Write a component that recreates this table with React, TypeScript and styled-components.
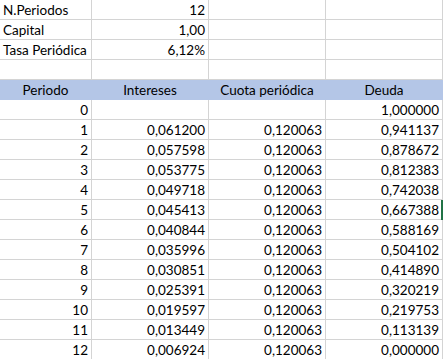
import React from "react";
import styled, { createGlobalStyle } from "styled-components";

const GlobalStyle = createGlobalStyle`
  html, body {
    margin: 0;
    padding: 0;
    background: #ffffff;
  }
  body {
    font-family: Lato, "Liberation Sans", sans-serif;
    font-size: 13.5px;
    color: #000000;
  }
`;

export const Sheet = styled.div`
  display: grid;
  grid-template-columns: 92px 117px 117px 117px;
  grid-auto-rows: 20px;
  width: 443px;
  overflow: hidden;
`;

export const Cell = styled.div<{ $align?: "left" | "right" | "center" }>`
  position: relative;
  box-sizing: border-box;
  height: 20px;
  border-right: 1px solid #d4d4d4;
  border-bottom: 1px solid #d4d4d4;
  padding: 0 3px;
  line-height: 20px;
  white-space: nowrap;
  overflow: visible;
  text-align: ${(p) => p.$align || "left"};
`;

export const HeadCell = styled(Cell)`
  background: #b4c6e7;
  border-right-color: #b4c6e7;
  border-bottom-color: #b4c6e7;
  text-align: center;
`;

export const Selected = styled(Cell)`
  &::after {
    content: "";
    position: absolute;
    right: -1px;
    top: 0;
    width: 2px;
    height: 20px;
    background: #217346;
  }
`;

const params: [string, string][] = [
  ["N.Periodos", "12"],
  ["Capital", "1,00"],
  ["Tasa Periódica", "6,12%"],
  ["", ""],
];

const rows: [string, string, string, string][] = [
  ["0", "", "", "1,000000"],
  ["1", "0,061200", "0,120063", "0,941137"],
  ["2", "0,057598", "0,120063", "0,878672"],
  ["3", "0,053775", "0,120063", "0,812383"],
  ["4", "0,049718", "0,120063", "0,742038"],
  ["5", "0,045413", "0,120063", "0,667388"],
  ["6", "0,040844", "0,120063", "0,588169"],
  ["7", "0,035996", "0,120063", "0,504102"],
  ["8", "0,030851", "0,120063", "0,414890"],
  ["9", "0,025391", "0,120063", "0,320219"],
  ["10", "0,019597", "0,120063", "0,219753"],
  ["11", "0,013449", "0,120063", "0,113139"],
  ["12", "0,006924", "0,120063", "0,000000"],
];

export default function App() {
  return (
    <>
      <GlobalStyle />
      <Sheet>
        {params.map(([label, value], i) => (
          <React.Fragment key={"p" + i}>
            <Cell>{label}</Cell>
            <Cell $align="right">{value}</Cell>
            <Cell />
            <Cell />
          </React.Fragment>
        ))}

        <HeadCell>Periodo</HeadCell>
        <HeadCell>Intereses</HeadCell>
        <HeadCell>Cuota periódica</HeadCell>
        <HeadCell>Deuda</HeadCell>

        {rows.map((r, i) => (
          <React.Fragment key={"r" + i}>
            <Cell $align="right">{r[0]}</Cell>
            <Cell $align="right">{r[1]}</Cell>
            <Cell $align="right">{r[2]}</Cell>
            {i === 5 ? (
              <Selected $align="right">{r[3]}</Selected>
            ) : (
              <Cell $align="right">{r[3]}</Cell>
            )}
          </React.Fragment>
        ))}
      </Sheet>
    </>
  );
}
